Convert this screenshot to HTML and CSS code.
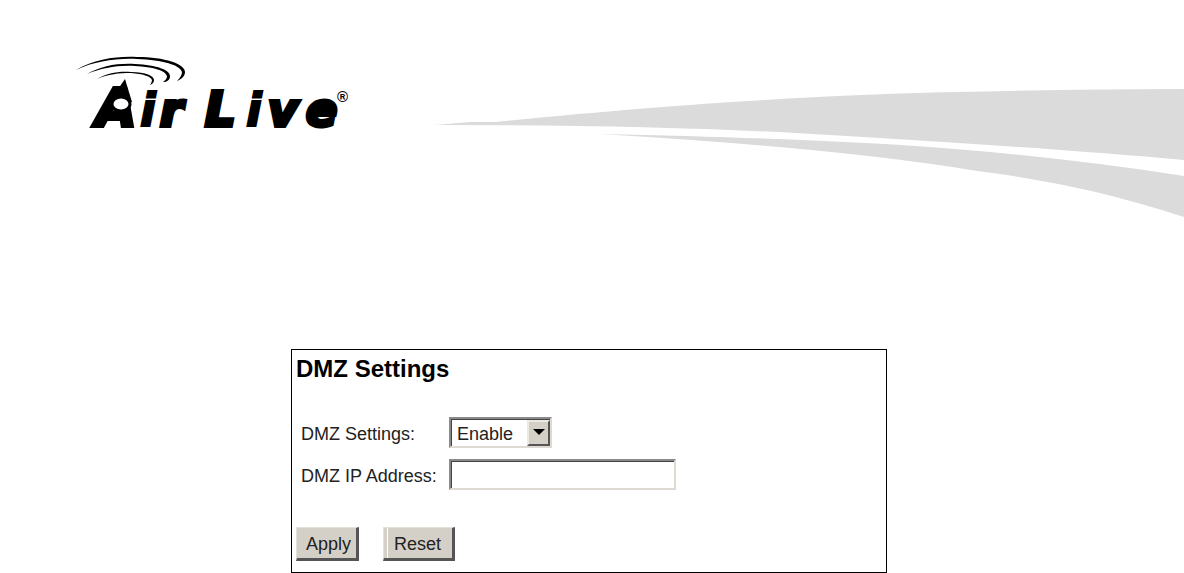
FILE: index.html
```html
<!DOCTYPE html>
<html lang="en">
<head>
    <meta charset="utf-8"/>
    <meta name="viewport" content="width=device-width, initial-scale=1"/>
    <title>DMZ Settings</title>

    <link rel="stylesheet" href="styles.css">
</head>
<body>
    <header class="banner">
        <svg class="logo" viewBox="0 0 276 74" role="img" aria-label="Air Live">
            <!-- radio waves -->
            <path d="M1 14C20 3 42 0 62 1C90 1 110 8 110 16C110 20 107 23 102 25C105 22 107 19 107 16C105 9 88 4 62 3C42 2 20 5 1 14Z"/>
            <path d="M12 18C26 10 42 7 60 8C82 9 95 14 95 20C95 24 92 26 88 26C91 24 92 22 92 20C90 14 78 11 60 10C42 9 27 12 12 18Z"/>
            <path d="M22 23C32 17 44 15 56 16C71 16 79 20 79 24C79 27 77 28 75 29C76 27 77 26 77 24C75 20 68 18 56 17C44 17 33 18 22 23Z"/>
            <!-- mast on top of the A -->
            <path d="M50 23L57 46H34Z"/>
            <text class="wordmark" y="70"><tspan class="wordmark-a" x="21">A</tspan><tspan class="wordmark-i" x="65">i</tspan><tspan x="85">r</tspan> <tspan class="wordmark-l" x="130">L</tspan><tspan class="wordmark-i" x="171">i</tspan><tspan x="193 231">ve</tspan></text>
            <ellipse class="logo-eye" cx="46" cy="48" rx="9" ry="7"/>
            <text class="registered" x="262" y="46">®</text>
        </svg>
        <svg class="swoosh" viewBox="0 0 748 130" preserveAspectRatio="none" aria-hidden="true">
            <path d="M0 37L35 34H60C250 15 390 7 520 4Q640 1 748 1V72Q590 58 360 45Q210 37 0 37Z"/>
            <path d="M165 46Q400 51 520 61Q640 71 748 88V129C680 107 620 93 535 82Q400 60 165 46Z"/>
        </svg>
    </header>

    <main>
        <form class="panel">
            <h1>DMZ Settings</h1>

            <div class="fields">
                <label for="dmz-enable">DMZ Settings:</label>
                <div class="select-box">
                    <select id="dmz-enable">
                        <option>Enable</option>
                        <option>Disable</option>
                    </select>
                    <span class="select-arrow"></span>
                </div>

                <label for="dmz-ip">DMZ IP Address:</label>
                <input type="text" id="dmz-ip"/>
            </div>

            <div class="actions">
                <button class="btn" type="submit">Apply</button>
                <button class="btn btn-reset" type="reset">Reset</button>
            </div>
        </form>
    </main>
</body>
</html>
```

FILE: styles.css
```css
* {
    box-sizing: border-box;
}

body {
    margin: 0;
    background-color: #fff;
    color: #222;
    font-family: "Liberation Sans", Arial, sans-serif;
    font-size: 18px;
}

.banner {
    display: flex;
    align-items: flex-start;
    gap: 84px;
    padding: 56px 0 0 75px;
}

.logo {
    flex: none;
    width: 276px;
    height: 74px;
    overflow: visible;
}

.wordmark {
    font-family: "DejaVu Sans", Verdana, sans-serif;
    font-size: 46px;
    font-weight: bold;
    font-style: italic;
    stroke: #000;
    stroke-width: 4px;
}

.wordmark-a {
    font-size: 52px;
}

.wordmark-i {
    stroke-width: 2px;
}

.wordmark-l {
    font-size: 48px;
}

.logo-eye {
    fill: #fff;
    stroke: #000;
    stroke-width: 3px;
}

.registered {
    font-size: 15px;
    font-weight: bold;
}

.swoosh {
    flex: 1;
    min-width: 0;
    height: 130px;
    margin-top: 32px;
    fill: #dbdbdb;
}

main {
    display: flex;
    justify-content: center;
    margin-top: 131px;
    padding-right: 6px;
}

.panel {
    width: 596px;
    max-width: 100%;
    padding: 4px 4px 11px;
    border: 1px solid #000;
}

h1 {
    margin: 0;
    color: #000;
    font-size: 24px;
    line-height: 30px;
}

.fields {
    display: grid;
    grid-template-columns: 140px 1fr;
    gap: 11px 8px;
    align-items: center;
    margin-top: 33px;
    padding-left: 5px;
}

.fields label {
    padding-top: 3px;
    white-space: nowrap;
}

select,
input {
    height: 31px;
    border: 2px solid;
    border-color: #8a8a8a #dedad3 #dedad3 #8a8a8a;
    border-radius: 0;
    background-color: #fff;
    box-shadow: inset 1px 1px 0 #444;
    color: #222;
    font: inherit;
}

input {
    width: 227px;
    max-width: 100%;
    padding: 0 6px;
}

.select-box {
    position: relative;
    width: 103px;
}

select {
    appearance: none;
    width: 100%;
    padding: 2px 26px 0 6px;
}

.select-arrow {
    position: absolute;
    top: 3px;
    right: 2px;
    width: 23px;
    height: 26px;
    border: 2px solid;
    border-color: #ece9e3 #555 #555 #ece9e3;
    background-color: #d4d0c8;
    pointer-events: none;
}

.select-arrow::before {
    content: "";
    position: absolute;
    top: 7px;
    left: 4px;
    border: 6px solid transparent;
    border-top-color: #000;
    border-bottom: 0;
}

.actions {
    display: flex;
    gap: 24px;
    margin-top: 37px;
}

.btn {
    height: 34px;
    padding: 2px 5px 0 9px;
    border: 1px solid;
    border-color: #e4e0da #555 #555 #e4e0da;
    border-width: 1px 3px 3px 1px;
    border-radius: 0;
    background-color: #d4d0c8;
    color: #222;
    font: inherit;
}

.btn-reset {
    padding: 2px 11px 0 10px;
    box-shadow: inset 3px 0 0 #d4d0c8, inset 4px 0 0 #fff;
}
```
